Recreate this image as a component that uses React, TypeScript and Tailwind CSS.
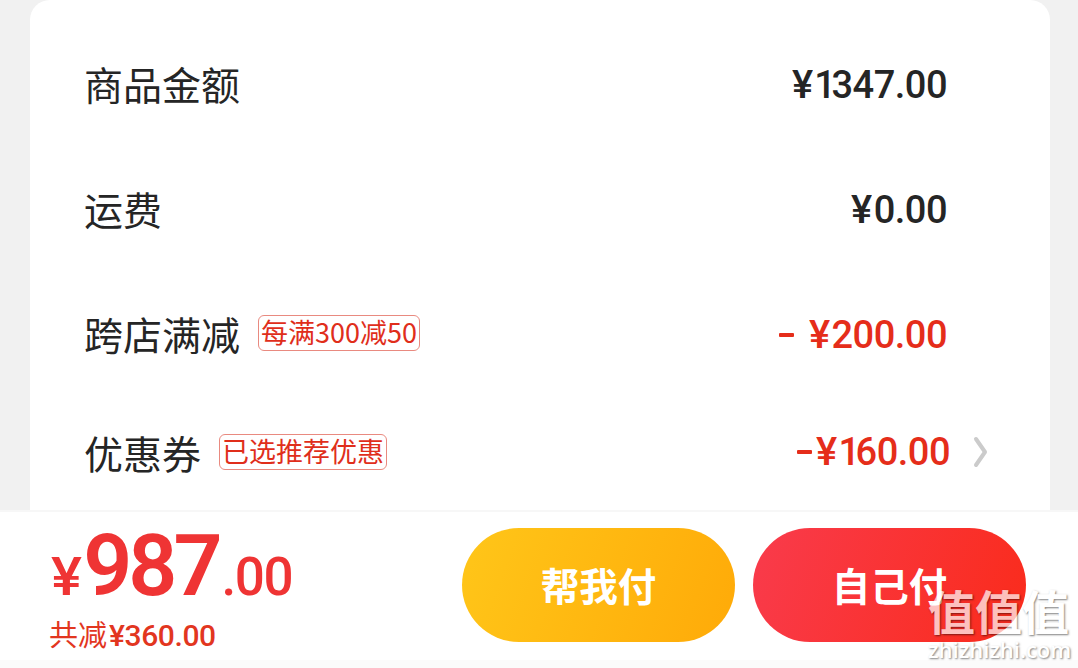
import type { ReactNode } from "react";

type PriceRowProps = {
    label: string;
    tag?: ReactNode;
    amount: ReactNode;
    discount?: boolean;
};

export default function App() {
    return (
        <div className="relative flex h-[668px] w-[1078px] flex-col overflow-hidden bg-[#f1f1f1] font-['Noto_Sans_CJK_SC',sans-serif]">
            <PriceCard />
            <PayBar />
            <Watermark />
        </div>
    );
}

function PriceCard() {
    return (
        <div className="mr-[28px] ml-[30px] flex h-[510px] shrink-0 flex-col rounded-t-[20px] bg-white pt-[22px] pl-[54px] pr-[103px]">
            <PriceRow label="商品金额" amount={<><Yen /><NarrowOne />347.00</>} />
            <PriceRow label="运费" amount={<><Yen />0.00</>} />
            <PriceRow
                label="跨店满减"
                tag={<Tag className="ml-[18px] w-[162px]">每满300减50</Tag>}
                amount={<><Minus className="mr-[15px]" /><Yen />200.00</>}
                discount
            />
            <div className="-mt-[6px] -mr-[43px] flex items-center">
                <PriceRow
                    label="优惠券"
                    tag={<Tag className="ml-[18px] w-[168px]">已选推荐优惠</Tag>}
                    amount={
                        <span className="mb-1 flex items-center">
                            <Minus className="mr-[4px]" /><Yen /><NarrowOne />60.00
                        </span>
                    }
                    discount
                />
                <svg className="-mt-[3px] ml-[22px] h-8 w-[18px] shrink-0" viewBox="0 0 18 32" fill="none" stroke="#cbcbcb" strokeWidth="4" strokeLinecap="round" strokeLinejoin="round">
                    <path d="M4 3L13 16L4 29" />
                </svg>
            </div>
        </div>
    );
}

function PriceRow({ label, tag, amount, discount }: PriceRowProps) {
    return (
        <div className="flex min-h-[125px] w-full items-center justify-between">
            <div className="-mt-[3px] flex items-center">
                <span className="text-[39px] leading-[56px] text-[#252525]">{label}</span>
                {tag}
            </div>
            <span className={`flex items-center font-[Roboto,sans-serif] text-[38px] leading-[44px] font-medium tracking-[-0.5px] ${discount ? "text-[#e52d1a]" : "text-[#252525]"}`}>
                {amount}
            </span>
        </div>
    );
}

function Yen() {
    return <span className="mr-[3px] origin-left scale-x-105">¥</span>;
}

function NarrowOne() {
    return <span className="-mr-[4px]">1</span>;
}

function Minus({ className }: { className: string }) {
    return <span className={`block h-1 w-[15px] rounded-[1px] bg-[#e52d1a] ${className}`} />;
}

function Tag({ children, className }: { children: ReactNode; className: string }) {
    return (
        <span className={`flex h-9 items-center justify-center rounded-md border border-[#e98a80] text-[27px] whitespace-nowrap text-[#e02e1b] ${className}`}>
            <span className="-mt-[2px]">{children}</span>
        </span>
    );
}

function PayBar() {
    return (
        <div className="flex h-[158px] shrink-0 items-start justify-between border-t-2 border-b-8 border-t-[#f7f7f7] border-b-[#fbfbfb] bg-white pr-[52px] pl-[49px]">
            <div className="flex flex-col">
                <div className="flex h-[99px] items-baseline pt-[8px] font-[Roboto,sans-serif] leading-[92px] font-medium text-[#ef3434]">
                    <span className="mr-[4px] ml-[2px] origin-left scale-x-110 text-[53px]">¥</span>
                    <span className="text-[86px] font-semibold tracking-[-4px]">987</span>
                    <span className="ml-[3px] text-[53px] tracking-[-1.500px]">.00</span>
                </div>
                <div className="flex items-baseline text-[29px] leading-[44px] text-[#e2361f]">
                    <span>共减</span>
                    <span className="ml-[2px] font-[Roboto,sans-serif] text-[30px] font-medium tracking-[-0.4px]">¥360.00</span>
                </div>
            </div>
            <div className="flex gap-[18px] pt-4">
                <button className="h-[114px] w-[273px] rounded-full bg-linear-[110deg,#ffc619,#ffaa08] text-[38.500px] font-bold text-white">
                    帮我付
                </button>
                <button className="h-[114px] w-[273px] rounded-full bg-linear-[110deg,#f93b4c,#fa2b1b] text-[38.500px] font-bold text-white">
                    自己付
                </button>
            </div>
        </div>
    );
}

function Watermark() {
    return (
        <div className="absolute top-[580px] left-[928px] flex flex-col text-white opacity-70 [text-shadow:1px_1px_2px_rgba(0,0,0,0.7)]">
            <span className="text-[47px] leading-[60px] font-bold">值值值</span>
            <span className="-mt-[5px] font-['Open_Sans',sans-serif] text-[22px] leading-[28px] font-semibold">zhizhizhi.com</span>
        </div>
    );
}
